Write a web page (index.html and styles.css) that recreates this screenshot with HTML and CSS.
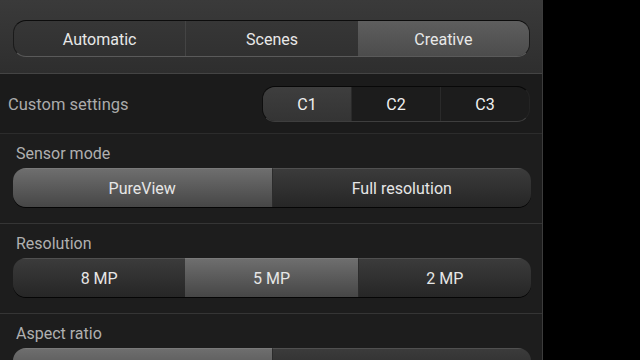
FILE: index.html
```html
<!DOCTYPE html>
<html>
<head>
<meta charset="utf-8">
<link rel="stylesheet" href="styles.css">
</head>
<body>
<div class="panel">
  <div class="top">
    <div class="tabs">
      <div class="tab">Automatic</div>
      <div class="tab">Scenes</div>
      <div class="tab on">Creative</div>
    </div>
  </div>
  <div class="custom">
    <div class="custom-label">Custom settings</div>
    <div class="cset">
      <div class="cbtn on">C1</div>
      <div class="cbtn">C2</div>
      <div class="cbtn">C3</div>
    </div>
  </div>
  <div class="section">
    <div class="label">Sensor mode</div>
    <div class="seg">
      <div class="sbtn on">PureView</div>
      <div class="sbtn">Full resolution</div>
    </div>
  </div>
  <div class="section">
    <div class="label">Resolution</div>
    <div class="seg">
      <div class="sbtn">8 MP</div>
      <div class="sbtn on">5 MP</div>
      <div class="sbtn">2 MP</div>
    </div>
  </div>
  <div class="section">
    <div class="label">Aspect ratio</div>
    <div class="seg">
      <div class="sbtn on"></div>
      <div class="sbtn"></div>
    </div>
  </div>
</div>
</body>
</html>
```
FILE: styles.css
```css
html, body {
  margin: 0;
  padding: 0;
  background: #000;
  height: 360px;
  overflow: hidden;
}
body {
  font-family: Roboto, "Noto Sans", sans-serif;
  font-size: 16px;
}
.panel {
  width: 542px;
  height: 360px;
  border-right: 1px solid #3c3c3c;
  background: #1d1d1d;
  overflow: hidden;
}
.top {
  height: 74px;
  box-sizing: border-box;
  padding: 20px 12px 0 13px;
  background: linear-gradient(#3a3a3a, #2e2e2e);
  border-bottom: 1px solid #444;
}
.tabs {
  display: flex;
  height: 37px;
  box-sizing: border-box;
  border-radius: 13px;
  border-top: 1px solid #0c0c0c;
  border-bottom: 1px solid #5a5a5a;
  border-left: 1px solid #1a1a1a;
  border-right: 1px solid #1a1a1a;
  overflow: hidden;
}
.tab {
  flex: 1;
  display: flex;
  align-items: center;
  justify-content: center;
  color: #e8e8e8;
  border-left: 1px solid #444;
  padding-top: 1px;
}
.tab:first-child { border-left: none; }
.tab.on {
  background: linear-gradient(#5e5e5e, #4c4c4c);
  border-left: none;
}
.custom {
  height: 60px;
  box-sizing: border-box;
  display: flex;
  align-items: center;
  justify-content: space-between;
  padding: 0 12px 0 8px;
  background: #1b1b1b;
  border-bottom: 1px solid #2c2c2c;
}
.custom-label {
  color: #ababab;
  font-size: 16.5px;
  padding-top: 2px;
}
.cset {
  display: flex;
  width: 268px;
  height: 36px;
  box-sizing: border-box;
  border-radius: 13px;
  border-top: 1px solid #080808;
  border-left: 1px solid #0e0e0e;
  border-right: 1px solid #242424;
  border-bottom: 1px solid #3e3e3e;
  overflow: hidden;
  background: #1c1c1c;
}
.cbtn {
  flex: 1;
  display: flex;
  align-items: center;
  justify-content: center;
  color: #f0f0f0;
  border-left: 1px solid #2a2a2a;
  padding-top: 1px;
}
.cbtn:first-child { border-left: none; }
.cbtn.on {
  background: linear-gradient(#3e3e3e, #343434);
}
.section {
  height: 90px;
  box-sizing: border-box;
  padding: 10px 11px 0 13px;
  border-bottom: 1px solid #353535;
  background: #1d1d1d;
}
.label {
  height: 20px;
  line-height: 20px;
  color: #b0b0b0;
  padding-left: 3px;
  margin-bottom: 4px;
}
.seg {
  display: flex;
  height: 39px;
  border-radius: 13px;
  overflow: hidden;
  box-shadow: 0 1px 0 #050505;
}
.sbtn {
  flex: 1;
  display: flex;
  align-items: center;
  justify-content: center;
  color: #e6e6e6;
  background: linear-gradient(#3b3b3b, #262626);
  border-top: 1px solid #505050;
  box-sizing: border-box;
  border-left: 1px solid #1a1a1a;
  padding-top: 1px;
}
.sbtn:first-child { border-left: none; }
.sbtn.on {
  background: linear-gradient(#6e6e6e, #464646);
  border-top: 1px solid #7a7a7a;
  border-left: none;
}
.sbtn.on + .sbtn { border-left: 1px solid #2c2c2c; }
```
